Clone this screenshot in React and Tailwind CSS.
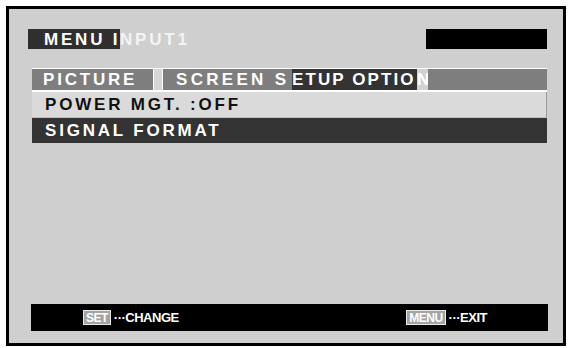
import React from "react";

const osd = { fontFamily: '"Liberation Sans", Arial, sans-serif' };

function KeyCap({ label }) {
  return (
    <span className="inline-flex h-[15px] items-center border border-[#e8e8e8] bg-[#a4a4a4] px-[2px] text-[12px] leading-none text-white">
      {label}
    </span>
  );
}

export default function App() {
  return (
    <div className="h-[348px] w-[570px] bg-white pl-[6px] pt-[6px]" style={osd}>
      <div className="flex h-[340px] w-[560px] flex-col border-[3px] border-black bg-[#cfcfcf]">
        {/* header */}
        <div className="ml-[19px] mr-[16px] mt-[20px] flex h-[20px] items-center text-[17px] font-bold leading-none tracking-[2.8px] text-white">
          <span className="flex h-[20px] w-[92px] items-center bg-[#2f2f2f] pl-[16px] whitespace-nowrap">
            MENU I
          </span>
          <span className="text-[#f4f4f4]">NPUT1</span>
          <span className="ml-auto h-[20px] w-[121px] bg-black" />
        </div>

        {/* menu rows */}
        <div className="ml-[23px] mr-[16px] mt-[19px] flex flex-col border-t border-white text-[17px] font-bold leading-none tracking-[2.8px]">
          <div className="flex h-[21px] items-center text-white whitespace-nowrap">
            <span className="flex h-full w-[121px] items-center bg-[#7e7e7e] pl-[11px]">PICTURE</span>
            <span className="h-full w-[10px] border-x border-white bg-[#d6d6d6]" />
            <span className="flex h-full w-[129px] items-center bg-[#7e7e7e] pl-[13px] tracking-[3.3px]">SCREEN S</span>
            <span className="flex h-full w-[125px] items-center bg-[#333333] tracking-[2.1px]">ETUP OPTIO</span>
            <span className="flex h-full w-[11px] items-center bg-[#d2d2d2] tracking-normal">N</span>
            <span className="h-full flex-1 bg-[#7e7e7e]" />
          </div>
          <div className="h-[2px] bg-white" />
          <div className="flex h-[25px] items-center border-r border-[#9a9a9a] bg-[#dadada] pl-[13px] text-[#111]">
            POWER MGT. :OFF
          </div>
          <div className="h-[1px] bg-[#bdbdbd]" />
          <div className="flex h-[25px] items-center bg-[#333333] pl-[13px] text-white">
            SIGNAL FORMAT
          </div>
        </div>

        {/* footer */}
        <div className="mb-[12px] ml-[22px] mr-[15px] mt-auto flex h-[27px] items-center bg-black text-[13px] font-bold leading-none tracking-[-0.5px] text-white">
          <div className="ml-[52px] flex items-center gap-[3px]">
            <KeyCap label="SET" />
            <span>···CHANGE</span>
          </div>
          <div className="ml-auto mr-[61px] flex items-center gap-[3px]">
            <KeyCap label="MENU" />
            <span>···EXIT</span>
          </div>
        </div>
      </div>
    </div>
  );
}
